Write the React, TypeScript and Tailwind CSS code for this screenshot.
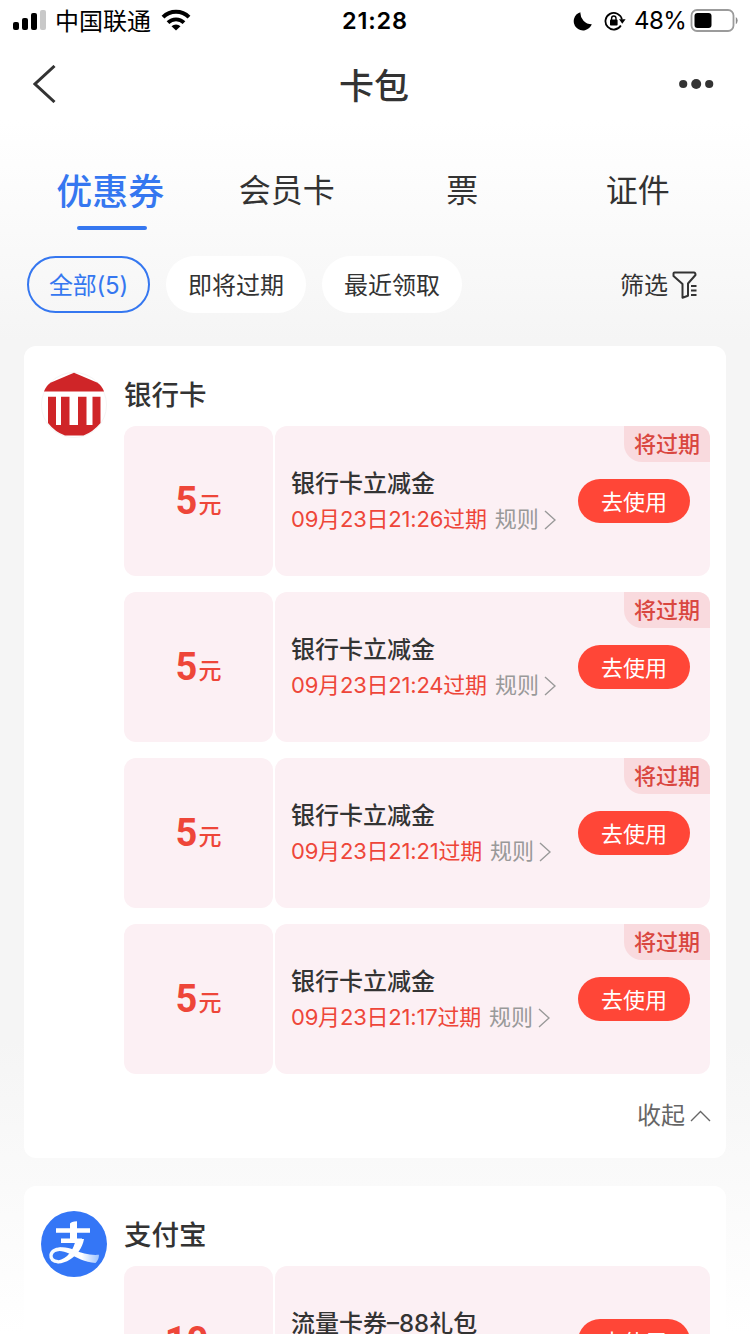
type Coupon = {
  amount: string;
  title: string;
  date: string;
  expiring: boolean;
};

const tabs = ["优惠券", "会员卡", "票", "证件"];

const bankCoupons: Coupon[] = [
  { amount: "5", title: "银行卡立减金", date: "09月23日21:26过期", expiring: true },
  { amount: "5", title: "银行卡立减金", date: "09月23日21:24过期", expiring: true },
  { amount: "5", title: "银行卡立减金", date: "09月23日21:21过期", expiring: true },
  { amount: "5", title: "银行卡立减金", date: "09月23日21:17过期", expiring: true },
];

const alipayCoupons: Coupon[] = [
  { amount: "10", title: "流量卡券–88礼包", date: "09月30日23:59过期", expiring: false },
];

function StatusBar() {
  return (
    <div className="relative flex h-10 items-center justify-between pr-3 pl-[13px] text-black">
      <div className="flex items-center">
        <svg width="33" height="20" viewBox="0 0 33 20" fill="currentColor">
          <rect x="0" y="12" width="6" height="8" rx="2" />
          <rect x="9" y="8" width="6" height="12" rx="2" />
          <rect x="18" y="3" width="6" height="17" rx="2" />
          <rect x="27" y="0" width="6" height="20" rx="2" fill="#c8c8c8" />
        </svg>
        <span className="ml-[9px] pt-[3px] text-2xl leading-none">中国联通</span>
        <svg className="ml-[10px]" width="30" height="22" viewBox="0 0 30 22">
          <path d="M2 8.2a18.5 18.5 0 0 1 26 0" fill="none" stroke="currentColor" strokeWidth="4" />
          <path d="M7 13.6a11.4 11.4 0 0 1 16 0" fill="none" stroke="currentColor" strokeWidth="3.8" />
          <path d="M10.5 17.3a6.6 6.6 0 0 1 9 0L15 21.6z" fill="currentColor" />
        </svg>
      </div>
      <span className="absolute top-[9px] left-[342px] text-[23.5px] leading-none font-semibold tracking-[0.8px]">
        21:28
      </span>
      <div className="flex items-center pt-px">
        <svg width="20" height="20" viewBox="0 0 20 20" fill="currentColor">
          <path d="M7.400 1.200A11.300 11.300 0 0 0 18.800 13.200 9.300 9.300 0 1 1 7.400 1.200z" />
        </svg>
        <svg className="ml-[11px]" width="22" height="20" viewBox="0 0 22 20">
          <path
            d="M16.900 14.500A8.300 8.300 0 1 1 17.900 8.500"
            fill="none"
            stroke="currentColor"
            strokeWidth="1.8"
          />
          <path d="M15 8.200h6.600l-3.300 4.600z" fill="currentColor" />
          <rect x="6" y="8.600" width="7.600" height="6" rx="0.8" fill="currentColor" />
          <path d="M7.600 9V7.200a2.200 2.200 0 0 1 4.400 0V9" fill="none" stroke="currentColor" strokeWidth="1.400" />
        </svg>
        <span className="ml-[8px] w-[56px] text-[24px] leading-none tracking-[-0.5px]">48%</span>
        <svg width="48" height="23" viewBox="0 0 48 23">
          <rect x="1.500" y="1" width="42" height="21" rx="5.500" fill="none" stroke="#9b9b9b" strokeWidth="1.800" />
          <rect x="4.500" y="4" width="17" height="15" rx="3" fill="#000" />
          <path d="M45.800 8v7.200a4.400 4.400 0 0 0 0-7.200z" fill="#8a8a8a" />
        </svg>
      </div>
    </div>
  );
}

function NavBar() {
  return (
    <div className="flex h-[88px] items-center justify-between pr-[36px] pl-[33px]">
      <svg width="24" height="38" viewBox="0 0 24 38" className="text-[#333]">
        <path d="M21.500 1L2 19l19.500 18" fill="none" stroke="currentColor" strokeWidth="3" />
      </svg>
      <h1 className="ml-[12px] pt-[4px] text-[35px] leading-none font-medium">卡包</h1>
      <svg width="35" height="10" viewBox="0 0 35 10" fill="#333">
        <circle cx="4.200" cy="5" r="4.100" />
        <circle cx="17.200" cy="5" r="5" />
        <circle cx="30.200" cy="5" r="4.100" />
      </svg>
    </div>
  );
}

function BankLogo() {
  return (
    <svg width="66" height="66" viewBox="0 0 66 66" className="shrink-0">
      <circle cx="33" cy="33" r="32.500" fill="#fff" stroke="#f5f5f5" />
      <path d="M33 0.800L56 10.500Q60.500 13 63 19.500H3Q5.500 13 10 10.500z" fill="#cf2528" />
      <path
        d="M7 24.700h8V53h5V24.700h8.500V53H37V24.700h8.500V53h6V24.700h8V51Q52 60 42.500 63.500H24Q14 60 7 51z"
        fill="#cf2528"
      />
    </svg>
  );
}

function AlipayLogo() {
  return (
    <svg width="66" height="66" viewBox="0 0 66 66" className="shrink-0">
      <defs>
        <linearGradient id="tail" gradientUnits="userSpaceOnUse" x1="8" y1="0" x2="58" y2="0">
          <stop offset="0" stopColor="#f4f9ff" />
          <stop offset="0.650" stopColor="#fff" />
          <stop offset="1" stopColor="#9dc3ff" />
        </linearGradient>
      </defs>
      <circle cx="33" cy="33" r="33" fill="#3476f6" />
      <path d="M29 30V12.500Q30 10.500 36 10.200V30z" fill="#fff" />
      <path d="M15 17.200h34v4.600H15zM20 27.500h21v4.400H20z" fill="#fff" />
      <path
        d="M34.800 28h8.200C41.500 37 36 44 29 48.500C24.500 51.300 20 52.800 15.500 52.300L17 49.500C26 48 33 39 34.800 28z"
        fill="#fff"
      />
      <path d="M17.500 50.600C12 50.800 9.500 47.500 10 44C10.600 40 15 37.800 20 38.300" fill="none" stroke="url(#tail)" strokeWidth="3.400" />
      <path
        d="M14 38C20 35 27 36.500 33 39C41 42.500 49 44.500 58 43.800Q58 49 54.500 52C44 51.500 35 46 28 42.500C23 40 19 39.200 14 40.500z"
        fill="url(#tail)"
      />
    </svg>
  );
}

function CouponItem({ coupon }: { coupon: Coupon }) {
  return (
    <div className="flex h-[150px] gap-[2px]">
      <div className="flex w-[149px] items-center justify-center rounded-xl bg-[#fcf0f4] text-[#ee4639]">
        <div className="flex items-baseline">
          <span className="font-['Roboto'] text-[38px] leading-none font-bold">{coupon.amount}</span>
          <span className="relative -top-px ml-px text-[23px] leading-none font-medium">元</span>
        </div>
      </div>
      <div className="relative flex flex-1 items-center justify-between rounded-xl bg-[#fcf0f4] pr-5 pl-4">
        <div>
          <div className="pt-px text-2xl leading-9 font-medium">{coupon.title}</div>
          <div className="flex items-center text-[22px] leading-[35px] whitespace-nowrap">
            <span className="tracking-[-0.2px] text-[#ee4639]">{coupon.date}</span>
            <span className="ml-2 text-[#999]">规则</span>
            <svg className="ml-[5px]" width="12" height="20" viewBox="0 0 12 20">
              <path d="M1 1l10 9-10 9" fill="none" stroke="#999" strokeWidth="1.400" />
            </svg>
          </div>
        </div>
        <button className="h-11 w-28 rounded-full bg-[#ff4637] pt-0.5 text-[22px] text-white">
          去使用
        </button>
        {coupon.expiring && (
          <span className="absolute top-0 right-0 flex h-9 w-[86px] items-center justify-center rounded-tr-xl rounded-bl-[18px] bg-[#f9dade] pt-px text-[22px] font-medium text-[#d94740]">
            将过期
          </span>
        )}
      </div>
    </div>
  );
}

function CouponList({ coupons }: { coupons: Coupon[] }) {
  return (
    <div className="mt-[11px] flex flex-col gap-4">
      {coupons.map((coupon) => (
        <CouponItem key={coupon.date} coupon={coupon} />
      ))}
    </div>
  );
}

export default function App() {
  return (
    <div className="h-[1334px] overflow-hidden bg-[linear-gradient(#fff_0px,#fff_120px,#f5f5f5_340px,#f5f5f5_1040px,#fff_1334px)] font-['Inter','Noto_Sans_CJK_SC',sans-serif] text-[#333]">
      <StatusBar />
      <NavBar />

      {/* Tabs */}
      <div className="mt-8 grid h-[70px] grid-cols-4 px-6">
        {tabs.map((tab, i) => (
          <div key={tab} className="flex flex-col items-center">
            {i === 0 ? (
              <>
                <span className="-ml-[3px] pt-0.5 text-4xl leading-[60px] font-medium text-[#3577f0]">
                  {tab}
                </span>
                <span className="mt-1 h-1 w-[70px] rounded-full bg-[#3577f0]" />
              </>
            ) : (
              <span className="-ml-px text-[32px] leading-[62px]">{tab}</span>
            )}
          </div>
        ))}
      </div>

      {/* Filters */}
      <div className="mt-[26px] flex h-[57px] items-center pl-[27px] text-2xl">
        <button className="h-[57px] w-[123px] rounded-full border-2 border-[#3577f0] pt-0.5 tracking-[-0.2px] text-[#3577f0]">
          全部(5)
        </button>
        <button className="ml-4 h-[57px] w-[140px] rounded-full bg-white pt-0.5">即将过期</button>
        <button className="ml-4 h-[57px] w-[140px] rounded-full bg-white pt-0.5">最近领取</button>
        <button className="ml-[158px] flex items-center">
          <span className="pt-0.5">筛选</span>
          <svg className="ml-1" width="26" height="28" viewBox="0 0 26 28" fill="none" stroke="#333">
            <path
              d="M2.500 1.500h19.500q1.500 0 1.500 2.500l-7.500 8.500v12.200l-5.500 2V13L1.500 5V2.500q0-1 1-1z"
              strokeWidth="2"
              strokeLinejoin="round"
            />
            <path d="M19 15h5.500M19 19.500h5.500M19 24h5.500" strokeWidth="1.800" />
          </svg>
        </button>
      </div>

      {/* Bank card coupons */}
      <section className="mx-6 mt-[33px] flex h-[812px] rounded-xl bg-white pr-4 pl-[17px]">
        <div className="mt-[26px]">
          <BankLogo />
        </div>
        <div className="ml-[17px] flex-1 pt-[29px]">
          <h2 className="text-[27.5px] leading-10 font-medium">银行卡</h2>
          <CouponList coupons={bankCoupons} />
          <div className="mt-[26px] -mr-px flex items-center justify-end text-2xl text-[#666]">
            收起
            <svg className="ml-[5px]" width="21" height="12" viewBox="0 0 21 12">
              <path d="M1 11l9.500-9.500L20 11" fill="none" stroke="#666" strokeWidth="1.400" />
            </svg>
          </div>
        </div>
      </section>

      {/* Alipay coupons */}
      <section className="mx-6 mt-7 flex rounded-xl bg-white pr-4 pl-[17px]">
        <div className="mt-[25px]">
          <AlipayLogo />
        </div>
        <div className="ml-[17px] flex-1 pt-[29px]">
          <h2 className="text-[27.5px] leading-10 font-medium">支付宝</h2>
          <CouponList coupons={alipayCoupons} />
        </div>
      </section>
    </div>
  );
}
